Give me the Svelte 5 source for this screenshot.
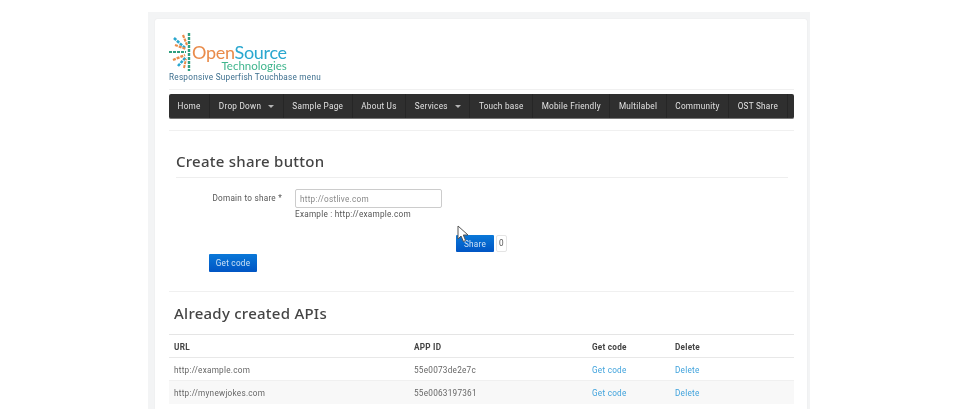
<script>
  const menu = [
    { label: 'Home' },
    { label: 'Drop Down', caret: true },
    { label: 'Sample Page' },
    { label: 'About Us' },
    { label: 'Services', caret: true },
    { label: 'Touch base' },
    { label: 'Mobile Friendly' },
    { label: 'Multilabel' },
    { label: 'Community' },
    { label: 'OST Share' }
  ]

  const apis = [
    { url: 'http://example.com', id: '55e0073de2e7c' },
    { url: 'http://mynewjokes.com', id: '55e0063197361' }
  ]
</script>

<div class="page">
  <div class="sheet">
    <header class="brand">
      <div class="logo">
        <svg class="burst" width="23" height="40" viewBox="0 0 23 40" aria-hidden="true">
          <g fill="none" stroke-dasharray="3 1">
            <path d="M20 1v38" stroke="#2f9f7f" stroke-width="2.4" />
            <path d="M0 20h17" stroke="#2f9f7f" stroke-width="1.8" />
            <path d="M5 6l11 10" stroke="#2aa7cf" stroke-width="2.6" />
            <path d="M14 3l4 10" stroke="#e98b4a" stroke-width="2.2" />
            <path d="M6 13l11 4" stroke="#e98b4a" stroke-width="2.2" />
            <path d="M4 28l12-5" stroke="#e98b4a" stroke-width="2.4" />
            <path d="M9 34l8-9" stroke="#2aa7cf" stroke-width="2.6" />
            <path d="M15 36l2-9" stroke="#e98b4a" stroke-width="2" />
          </g>
        </svg>
        <div class="wordmark">
          <div class="name"><span class="open">Open</span><span class="source">Source</span></div>
          <div class="tech">Technologies</div>
        </div>
      </div>
      <div class="tagline">Responsive Superfish Touchbase menu</div>
    </header>

    <hr class="rule first" />

    <nav class="menu">
      {#each menu as item}
        <a href="#top" class:has-caret={item.caret}>{item.label}{#if item.caret}<i class="caret"></i>{/if}</a>
      {/each}
    </nav>

    <hr class="rule" />

    <section class="create">
      <h2>Create share button</h2>
      <div class="field">
        <label for="domain">Domain to share *</label>
        <div>
          <input id="domain" placeholder="http://ostlive.com" />
          <div class="hint">Example : http://example.com</div>
        </div>
      </div>
      <div class="share-row">
        <button class="btn share">Share</button>
        <span class="count">0</span>
        <svg class="cursor" width="12" height="18" viewBox="0 0 12 18" aria-hidden="true">
          <path d="M1 1v13l3-3 2.400 5.500 2.200-1L6.300 10H11z" fill="#fff" stroke="#555" stroke-width="1" />
        </svg>
      </div>
      <button class="btn getcode">Get code</button>
    </section>

    <hr class="rule low" />

    <h2 class="apis-title">Already created APIs</h2>

    <table>
      <thead>
        <tr><th class="c-url">URL</th><th class="c-id">APP ID</th><th class="c-get">Get code</th><th>Delete</th></tr>
      </thead>
      <tbody>
        {#each apis as api}
          <tr>
            <td>{api.url}</td>
            <td>{api.id}</td>
            <td><a href="#top">Get code</a></td>
            <td><a href="#top">Delete</a></td>
          </tr>
        {/each}
      </tbody>
    </table>
  </div>
</div>

<style>
  :global(body) {
    margin: 0;
    background: #fff;
    font-family: Roboto, "Liberation Sans", Arial, sans-serif;
    font-size: 8.2px;
    letter-spacing: 0.25px;
    color: #555;
  }
  .page {
    box-sizing: border-box;
    width: 662px;
    height: 397px;
    margin: 12px 0 0 148px;
    padding: 7px 3px 0 7px;
    background: #f3f4f5;
    filter: blur(0.4px);
  }
  .sheet {
    box-sizing: border-box;
    height: 390px;
    padding: 13px 13px 0 14px;
    background: #fff;
    border-radius: 2px 2px 0 0;
    box-shadow: 0 0 1px #d8d8d8;
  }
  .logo {
    display: flex;
    align-items: flex-start;
    height: 38px;
  }
  .burst { flex: none; }
  .wordmark { margin-top: 13px; }
  .name {
    font-family: Lato, "Liberation Sans", sans-serif;
    font-size: 18px;
    line-height: 14px;
    letter-spacing: -0.3px;
  }
  .open { color: #e98b4a; }
  .source { color: #2aa7cf; }
  .tech {
    margin-top: 2px;
    text-align: right;
    font-family: Lato, "Liberation Sans", sans-serif;
    font-size: 11.5px;
    line-height: 9px;
    letter-spacing: 0;
    color: #3fb58d;
  }
  .tagline {
    margin-top: 2px;
    line-height: 11px;
    color: #3d6f8e;
  }
  .rule {
    width: 625px;
    height: 1px;
    margin: 0;
    border: 0;
    background: #f0f0f0;
  }
  .rule.first { margin-top: 6px; }
  .menu {
    display: flex;
    box-sizing: border-box;
    width: 625px;
    height: 25px;
    margin: 4px 0 11px;
    background: #2f2f2f;
    border-radius: 2px;
    border-bottom: 1px solid #777;
  }
  .menu a {
    display: flex;
    align-items: center;
    padding: 0 8.6px;
    color: #e2e2e2;
    text-decoration: none;
    border-right: 1px solid #262626;
    white-space: nowrap;
  }
  .caret {
    width: 0;
    height: 0;
    margin-left: 7px;
    margin-top: 1px;
    border: 3.5px solid transparent;
    border-top: 3.5px solid #b5b5b5;
    border-bottom: 0;
  }
  h2 {
    margin: 0;
    font-family: "Noto Sans", "Open Sans", sans-serif;
    font-weight: 500;
    font-size: 15px;
    letter-spacing: 0.25px;
    color: #444;
  }
  .create h2 {
    width: 612px;
    height: 47px;
    margin-left: 7px;
    padding-top: 20px;
    line-height: 21px;
    box-sizing: border-box;
    border-bottom: 1px solid #eee;
  }
  .field {
    display: flex;
    margin-top: 11px;
  }
  .field label {
    width: 113px;
    text-align: right;
    line-height: 19px;
    color: #555;
  }
  .field > div { margin-left: 13px; }
  input {
    display: block;
    box-sizing: border-box;
    width: 147px;
    height: 19px;
    padding: 0 4px;
    border: 1px solid #ccc;
    border-radius: 2px;
    font: inherit;
    letter-spacing: inherit;
    background: #fff;
  }
  input::placeholder { color: #888; opacity: 1; }
  .hint {
    margin-top: 1px;
    line-height: 11px;
    color: #555;
  }
  .share-row {
    position: relative;
    display: flex;
    align-items: flex-start;
    gap: 2px;
    height: 19px;
    margin: 15px 0 0 287px;
  }
  .btn {
    border: 0;
    color: #cfe2f6;
    font: inherit;
    letter-spacing: inherit;
    background: linear-gradient(#0a78d8, #0055c4);
    border-radius: 1px;
    padding: 0;
  }
  .share { width: 38px; height: 17px; }
  .count {
    box-sizing: border-box;
    width: 11px;
    height: 17px;
    line-height: 15px;
    text-align: center;
    border: 1px solid #e4e4e4;
    border-radius: 2px;
  }
  .cursor {
    position: absolute;
    left: 1px;
    top: -10px;
  }
  .getcode {
    display: block;
    width: 48px;
    height: 18px;
    margin: 0 0 0 40px;
  }
  .low { margin-top: 19px; }
  .apis-title {
    height: 42px;
    padding: 10px 0 0 5px;
    box-sizing: border-box;
    line-height: 22px;
  }
  table {
    width: 625px;
    border-collapse: collapse;
    table-layout: fixed;
  }
  th, td {
    box-sizing: border-box;
    height: 23px;
    padding: 1px 5px 0;
    text-align: left;
    vertical-align: middle;
  }
  th {
    font-weight: 700;
    color: #444;
    border-top: 1px solid #e5e5e5;
    border-bottom: 1px solid #e8e8e8;
  }
  td { color: #666; border-bottom: 1px solid #f0f0f0; }
  tbody tr:nth-child(2) td { background: #f8f8f8; border-bottom: 0; }
  .c-url { width: 240px; }
  .c-id { width: 178px; }
  .c-get { width: 83px; }
  td a { color: #3fa2dc; text-decoration: none; }
</style>
